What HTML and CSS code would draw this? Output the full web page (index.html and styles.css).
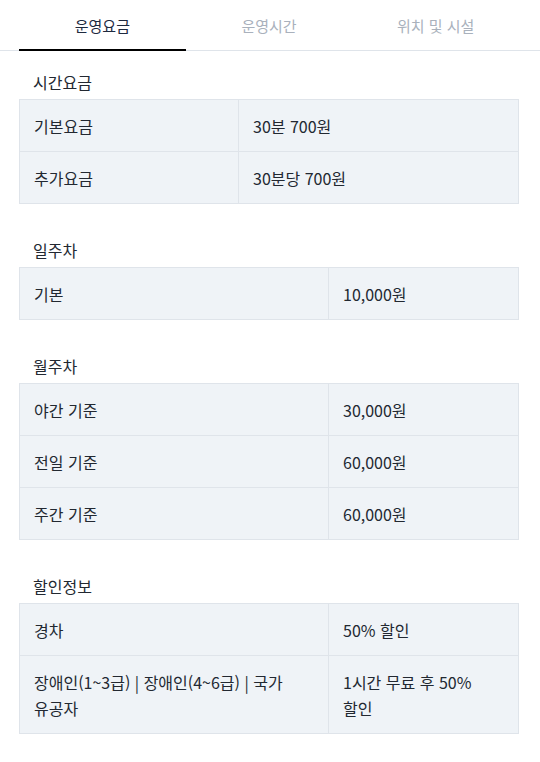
FILE: index.html
```html
<!DOCTYPE html>
<html lang="ko">
<head>
<meta charset="utf-8">
<title>운영요금</title>
<link rel="stylesheet" href="styles.css">
</head>
<body>
<nav class="tabs">
  <div class="tabs-inner">
    <div class="tab active">운영요금</div>
    <div class="tab">운영시간</div>
    <div class="tab">위치 및 시설</div>
  </div>
</nav>
<main class="content">
  <section class="sec">
    <h2 class="sec-title">시간요금</h2>
    <table class="tbl tbl-narrow">
      <tr><td class="c1">기본요금</td><td>30분 700원</td></tr>
      <tr><td class="c1">추가요금</td><td>30분당 700원</td></tr>
    </table>
  </section>
  <section class="sec">
    <h2 class="sec-title">일주차</h2>
    <table class="tbl">
      <tr><td class="c1">기본</td><td>10,000원</td></tr>
    </table>
  </section>
  <section class="sec">
    <h2 class="sec-title">월주차</h2>
    <table class="tbl">
      <tr><td class="c1">야간 기준</td><td>30,000원</td></tr>
      <tr><td class="c1">전일 기준</td><td>60,000원</td></tr>
      <tr><td class="c1">주간 기준</td><td>60,000원</td></tr>
    </table>
  </section>
  <section class="sec">
    <h2 class="sec-title">할인정보</h2>
    <table class="tbl">
      <tr><td class="c1">경차</td><td>50% 할인</td></tr>
      <tr><td class="c1">장애인(1~3급) | 장애인(4~6급) | 국가 유공자</td><td>1시간 무료 후 50% 할인</td></tr>
    </table>
  </section>
</main>
</body>
</html>
```
FILE: styles.css
```css
* { box-sizing: border-box; }
html, body {
  margin: 0;
  padding: 0;
  background: #ffffff;
  font-family: "Noto Sans CJK KR", "Noto Sans", sans-serif;
  color: #222831;
}
.tabs {
  border-bottom: 1px solid #dfe4ea;
  height: 51px;
}
.tabs-inner {
  display: flex;
  margin-left: 19px;
  width: 500px;
}
.tab {
  flex: 1 1 0;
  height: 51px;
  display: flex;
  align-items: center;
  justify-content: center;
  padding-top: 3px;
  font-size: 15px;
  line-height: 24px;
  color: #a9b1bc;
  border-bottom: 2px solid transparent;
}
.tab.active {
  color: #1e2a3f;
  border-bottom-color: #000000;
}
.content {
  padding: 19px 21px 40px 19px;
}
.sec:first-child {
  margin-bottom: 1px;
}
.sec + .sec {
  margin-top: 34px;
}
.sec-title {
  margin: 0 0 5px 0;
  padding: 0 14px;
  font-size: 16px;
  line-height: 24px;
  font-weight: 400;
  color: #222831;
}
.tbl {
  width: 500px;
  border-collapse: collapse;
  table-layout: fixed;
}
.tbl td {
  background: #eff3f7;
  border: 1px solid #dfe4ea;
  padding: 13px 14px 12px 14px;
  font-size: 16px;
  line-height: 26px;
  color: #222831;
  vertical-align: middle;
  word-break: keep-all;
}
.tbl .c1 { width: 309px; }
.tbl-narrow .c1 { width: 219px; }
```
